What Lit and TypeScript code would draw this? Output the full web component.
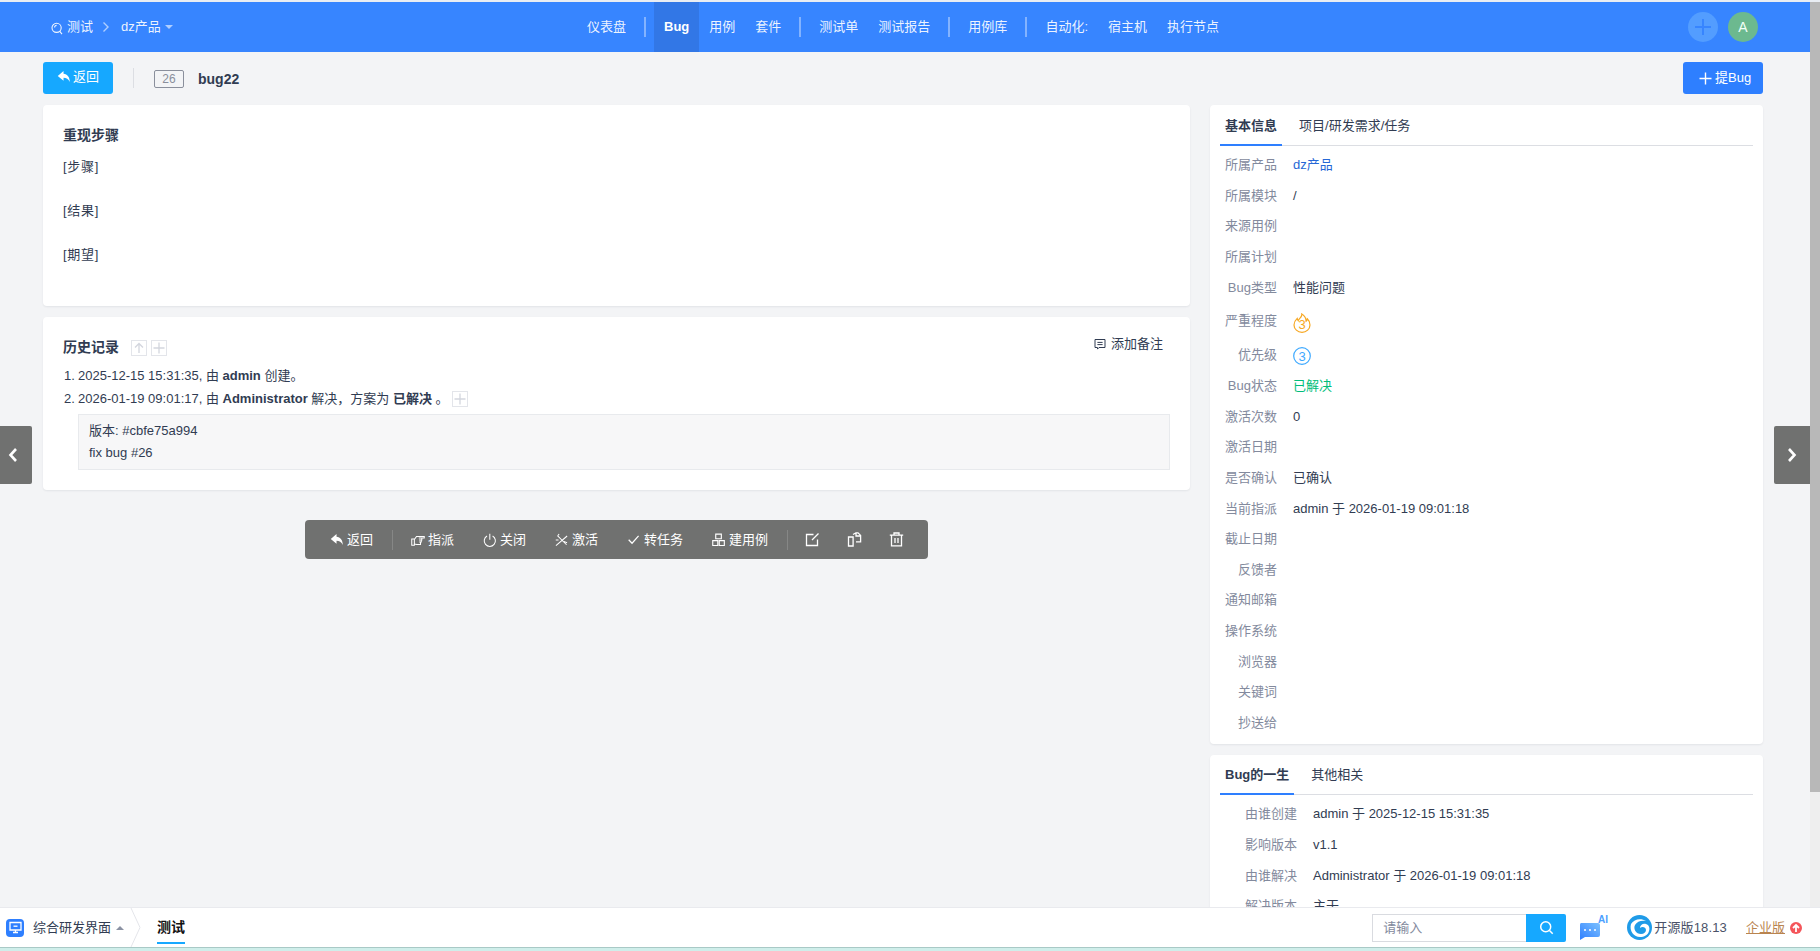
import { LitElement, html, css, svg } from "lit";
import { customElement } from "lit/decorators.js";

const reply = svg`<path d="M7 1.200.8 6.400 7 11.600V8.300c3 0 5.200 1.200 6.700 4.500 0-5-2.600-8.300-6.700-8.700z" fill="currentColor"/>`;
const handIcon = svg`<path d="M.8 6.400h2.800v6.800H.8zM3.600 7l2.300-3.200h8.300v1.600H8.400M8.400 5.400h3.200v2.200H8.600M11 7.600v2H8.800M10.200 9.600v2.800H6.200L3.600 11.800" fill="none" stroke="currentColor" stroke-width="1.100"/>`;
const powerIcon = svg`<path d="M4.300 3.200a6 6 0 1 0 6 0M7.300 .8v6.400" fill="none" stroke="currentColor" stroke-width="1.100"/>`;
const wandIcon = svg`<path d="M1 13.500 13 3.200M2.600 2.800l9.800 9.800M.8 7.500h3M3 3 4.400 1M9.500 9l3.400 1.400" fill="none" stroke="currentColor" stroke-width="1.100"/>`;
const checkIcon = svg`<path d="M1.800 7.200 5.400 11l7-8" fill="none" stroke="currentColor" stroke-width="1.300"/>`;
const treeIcon = svg`<path d="M4 1.200h6v5H4zM.8 8.200h5.400v5.200H.8zM7.800 8.200h5.400v5.200H7.800z" fill="none" stroke="currentColor" stroke-width="1.200"/>`;
const editIcon = svg`<path d="M12.500 7.500v6h-11v-11h7M13.500 1.500 7 8" fill="none" stroke="currentColor" stroke-width="1.300"/>`;
const copyIcon = svg`<path d="M1.500 5h4.600v9H1.500zM6 2.500 9 .8h2l2.600 2.600v6.400H9M9 1v3h4.400" fill="none" stroke="currentColor" stroke-width="1.300"/>`;
const trashIcon = svg`<path d="M.8 3.200h13.400M5 3V1h5v2M2.500 3.200v10.600h10V3.200M6 6v5M9 6v5" fill="none" stroke="currentColor" stroke-width="1.300"/>`;

const ic = (body: unknown) => html`<svg class="ic" viewBox="0 0 15 15">${body}</svg>`;

const navGroups: string[][] = [["仪表盘"], ["Bug", "用例", "套件"], ["测试单", "测试报告"], ["用例库"], ["自动化:", "宿主机", "执行节点"]];

const basicRows: { k: string; v?: string; c?: string; t?: string }[] = [
  { k: "所属产品", v: "dz产品", c: "link" },
  { k: "所属模块", v: "/" },
  { k: "来源用例" },
  { k: "所属计划" },
  { k: "Bug类型", v: "性能问题" },
  { k: "严重程度", t: "sev" },
  { k: "优先级", t: "pri" },
  { k: "Bug状态", v: "已解决", c: "ok" },
  { k: "激活次数", v: "0" },
  { k: "激活日期" },
  { k: "是否确认", v: "已确认" },
  { k: "当前指派", v: "admin 于 2026-01-19 09:01:18" },
  { k: "截止日期" },
  { k: "反馈者" },
  { k: "通知邮箱" },
  { k: "操作系统" },
  { k: "浏览器" },
  { k: "关键词" },
  { k: "抄送给" },
];

const lifeRows = [
  ["由谁创建", "admin 于 2025-12-15 15:31:35"],
  ["影响版本", "v1.1"],
  ["由谁解决", "Administrator 于 2026-01-19 09:01:18"],
  ["解决版本", "主干"],
];

const actions = [
  { i: handIcon, t: "指派" },
  { i: powerIcon, t: "关闭" },
  { i: wandIcon, t: "激活" },
  { i: checkIcon, t: "转任务" },
  { i: treeIcon, t: "建用例" },
];

@customElement("app-root")
export class AppRoot extends LitElement {
  static styles = css`
    :host {
      display: flex;
      flex-direction: column;
      position: relative;
      height: 951px;
      overflow: hidden;
      background: #e9edf3;
      padding-top: 2px;
      box-sizing: border-box;
      font: 13px/20px "Liberation Sans", "Noto Sans CJK SC", sans-serif;
      color: #313c52;
    }
    * { box-sizing: border-box; }
    .ic { width: 14px; height: 14px; flex: none; display: block; }
    .main { height: 905px; flex: none; display: flex; }
    .scroller { flex: 1; min-width: 0; overflow: hidden; background: #f3f4f6; }
    .track { width: 10px; flex: none; background: #eeeeee; }
    .thumb { height: 790px; background: #b8b8b8; }

    .header { height: 50px; background: #3785ff; display: flex; align-items: stretch; color: #fff; }
    .crumbs { width: 577px; flex: none; padding-left: 51px; display: flex; align-items: center; color: rgba(255,255,255,.92); }
    .crumbs .search { width: 12px; height: 13px; margin-right: 4px; margin-top: 2px; }
    .crumbs .chev { width: 8px; height: 12px; margin: 0 11px 0 9px; }
    .caret { width: 0; height: 0; border: 4px solid transparent; border-top: 4px solid rgba(255,255,255,.6); border-bottom: 0; margin-left: 4px; }
    .nav { display: flex; align-items: stretch; }
    .nav a { padding: 0 10px; display: flex; align-items: center; color: rgba(255,255,255,.92); }
    .nav a.on { background: #3277e6; color: #fff; font-weight: 700; }
    .nav i { width: 2px; height: 20px; margin: 15px 8px 0; background: rgba(255,255,255,.38); }
    .user { margin-left: auto; padding-right: 52px; display: flex; align-items: center; gap: 10px; }
    .circle { width: 30px; height: 30px; border-radius: 50%; display: flex; align-items: center; justify-content: center; }
    .circle.plus { background: #539dff; color: #3785ff; }
    .circle.plus svg { width: 18px; height: 18px; }
    .circle.a { background: #6cb98f; color: #f2fff8; font-size: 14px; }

    .wrap { padding: 10px 47px 19px 43px; }
    .bar { display: flex; align-items: center; height: 32px; margin-bottom: 11px; }
    .btn { height: 32px; border-radius: 3px; color: #fff; display: flex; align-items: center; }
    .btn.back { width: 70px; background: #16a8ff; padding: 0 0 2px 14px; gap: 2px; }
    .btn.new { width: 80px; background: #2e7fff; padding-left: 15px; gap: 2px; margin-left: auto; }
    .btn.new .ic { width: 15px; height: 15px; }
    .bar .sep { width: 1px; height: 20px; background: #dcdee3; margin: 0 20px; }
    .idbox { width: 30px; height: 18px; border: 1px solid #8a8f9c; border-radius: 2px; font-size: 12px; line-height: 16px; color: #8a8f9c; text-align: center; margin: 1px 14px 0 0; }
    .bar b { font-size: 14px; margin-top: 2px; }

    .cols { display: grid; grid-template-columns: 1147px 553px; column-gap: 20px; align-items: start; }
    .card { background: #fff; border-radius: 4px; box-shadow: 0 1px 2px rgba(30,40,60,.08); }
    .left { display: flex; flex-direction: column; gap: 11px; }
    .steps { height: 201px; padding: 20px; }
    .title { font-size: 14px; font-weight: 700; line-height: 20px; }
    .steps .title { margin-bottom: 11px; }
    .steps p { margin: 0 0 22px; line-height: 22px; letter-spacing: .7px; }

    .hist { padding: 20px 27px 20px 20px; }
    .hhead { display: flex; align-items: flex-start; height: 27px; }
    .mini { width: 16px; height: 16px; border: 1px solid #e3e5ea; color: #d3d6de; margin-left: 4px; display: flex; align-items: center; justify-content: center; margin-top: 3px; }
    .mini.first { margin-left: 12px; }
    .mini svg { width: 12px; height: 12px; }
    .note { margin-left: auto; display: flex; align-items: center; gap: 5px; margin-top: -3px; }
    .note .ic { width: 12px; height: 12px; }
    .li { display: flex; align-items: center; height: 23.5px; }
    .li .n { width: 14px; margin-left: 1px; flex: none; }
    .li b { margin: 0 3.6px; }
    .li .mini { margin: 0 0 0 3px; }
    .comment { margin: 3px -7px 0 15px; padding: 5px 10px; background: #f7f7f8; border: 1px solid #e8eaed; line-height: 22px; }

    .actions { align-self: center; width: 623px; height: 39px; margin-top: 19px; padding-left: 10.5px; border-radius: 4px; background: #707170; color: #fff; display: flex; align-items: center; }
    .act { display: flex; align-items: center; gap: 3px; padding: 0 14.5px; }
    .act.iconly { padding: 0 13.5px; }
    .act .ic { width: 14px; height: 14px; }
    .act.iconly .ic { width: 15px; height: 15px; }
    .actions i { width: 1px; height: 20px; background: #868786; margin: 0 4px; }

    .right { display: flex; flex-direction: column; gap: 11px; }
    .side { padding: 0 10px 6px; }
    .tabs { display: flex; height: 41px; border-bottom: 1px solid #dcdee3; margin-bottom: 4px; }
    .tab { padding: 0 5px; height: 41px; line-height: 41px; margin-right: 12px; border-bottom: 2px solid transparent; }
    .tab.on { font-weight: 700; border-bottom-color: #2e7fff; }
    .tabs.b { height: 40px; }
    .tabs.b .tab { height: 40px; line-height: 40px; margin-right: 12px; }
    .row { display: grid; grid-template-columns: 57px 1fr; column-gap: 16px; height: 30.6px; align-items: center; }
    .life { height: 285px; }
    .life .row { grid-template-columns: 77px 1fr; }
    .row.sev { height: 36.5px; }
    .row.pri { height: 31.5px; }
    .k { text-align: right; color: #838a9d; }
    .link { color: #2667d6; }
    .ok { color: #00bd7a; }
    .flame { width: 18px; height: 20px; display: block; margin-top: 4px; }
    .prio { width: 18px; height: 18px; display: block; margin-top: 1px; }

    .float { position: absolute; top: 426px; height: 58px; background: #707170; color: #fff; display: flex; align-items: center; justify-content: center; }
    .float svg { width: 12px; height: 16px; }
    .float.p { left: 0; width: 32px; padding-right: 6px; border-radius: 0 2px 2px 0; }
    .float.x { left: 1774px; width: 36px; border-radius: 2px 0 0 2px; }

    .bottom { height: 40px; flex: none; background: #fff; border-top: 1px solid #e9eaee; display: flex; align-items: center; padding-left: 6px; padding-right: 18px; }
    .appico { width: 18px; height: 18px; border-radius: 4px; background: #2e7fff; display: flex; align-items: center; justify-content: center; margin-right: 9px; }
    .appico svg { width: 13px; height: 13px; }
    .up { width: 0; height: 0; border: 4px solid transparent; border-bottom: 4px solid #8b92a3; border-top: 0; margin: 0 6px 0 5px; }
    .ang { width: 11px; height: 39px; margin-right: 16px; }
    .cur { font-size: 14px; font-weight: 700; color: #111; height: 32px; line-height: 30px; border-bottom: 2px solid #16a8ff; }
    .bright { margin-left: auto; display: flex; align-items: center; }
    .inp { width: 154px; height: 28px; border: 1px solid #d9dbe0; border-right: 0; padding-left: 10px; line-height: 26px; color: #838a9d; }
    .sbtn { width: 40px; height: 28px; background: #16a8ff; border-radius: 0 2px 2px 0; display: flex; align-items: center; justify-content: center; color: #fff; }
    .sbtn svg { width: 15px; height: 15px; }
    .ai { width: 30px; height: 26px; margin: 0 19px 0 12px; }
    .logo { width: 25px; height: 25px; margin-right: 2px; }
    .ver { color: #4a5268; letter-spacing: .15px; margin-right: 19px; }
    .ent { color: #b9844f; text-decoration: underline; margin-right: 5px; }
    .upg { width: 12px; height: 12px; }
    .strip { height: 4px; flex: none; background: #cfeeea; border-top: 1px solid #a9c9c6; }
  `;

  render() {
    return html`
      <div class="main">
        <div class="scroller">
          <div class="header">
            <div class="crumbs">
              <svg class="search" viewBox="0 0 12 13"><circle cx="5.600" cy="5.800" r="4.600" fill="none" stroke="currentColor" stroke-width="1.100"/><path d="m8.800 9.400 2.200 2.800M3.600 5.400a2 2 0 0 1 2-2" fill="none" stroke="currentColor" stroke-width="1.100"/></svg>
              <span>测试</span>
              <svg class="chev" viewBox="0 0 8 12"><path d="m1.500 1.500 4.500 4.500-4.500 4.500" fill="none" stroke="rgba(255,255,255,.6)" stroke-width="1.400"/></svg>
              <span>dz产品</span><span class="caret"></span>
            </div>
            <div class="nav">
              ${navGroups.map((g, gi) => html`
                ${gi ? html`<i></i>` : ""}
                ${g.map((n) => html`<a class=${n === "Bug" ? "on" : ""}>${n}</a>`)}
              `)}
            </div>
            <div class="user">
              <div class="circle plus"><svg viewBox="0 0 18 18"><path d="M9 1v16M1 9h16" stroke="currentColor" stroke-width="2"/></svg></div>
              <div class="circle a">A</div>
            </div>
          </div>
          <div class="wrap">
            <div class="bar">
              <div class="btn back">${ic(reply)}<span>返回</span></div>
              <div class="sep"></div>
              <div class="idbox">26</div>
              <b>bug22</b>
              <div class="btn new">
                <svg class="ic" viewBox="0 0 15 15"><path d="M7.500 1.500v12M1.500 7.500h12" stroke="currentColor" stroke-width="1.400"/></svg>
                <span>提Bug</span>
              </div>
            </div>
            <div class="cols">
              <div class="left">
                <div class="card steps">
                  <div class="title">重现步骤</div>
                  <p>[步骤]</p><p>[结果]</p><p>[期望]</p>
                </div>
                <div class="card hist">
                  <div class="hhead">
                    <span class="title">历史记录</span>
                    <span class="mini first"><svg viewBox="0 0 12 12"><path d="M6 11V1.500M2 5.500l4-4 4 4" fill="none" stroke="currentColor" stroke-width="1.300"/></svg></span>
                    <span class="mini"><svg viewBox="0 0 12 12"><path d="M6 .5v11M.5 6h11" fill="none" stroke="currentColor" stroke-width="1.300"/></svg></span>
                    <span class="note">
                      <svg class="ic" viewBox="0 0 12 12"><path d="M1 1.500h10v8H5l-1.500 1.600V9.500H1zM3.400 4.400h5.200M3.400 6.600h5.200" fill="none" stroke="currentColor" stroke-width="1"/></svg>
                      添加备注
                    </span>
                  </div>
                  <div class="li"><span class="n">1.</span><span>2025-12-15 15:31:35, 由</span><b>admin</b><span>创建。</span></div>
                  <div class="li"><span class="n">2.</span><span>2026-01-19 09:01:17, 由</span><b>Administrator</b><span>解决，方案为</span><b>已解决</b><span>。</span>
                    <span class="mini"><svg viewBox="0 0 12 12"><path d="M6 .5v11M.5 6h11" fill="none" stroke="currentColor" stroke-width="1.300"/></svg></span>
                  </div>
                  <div class="comment">版本: #cbfe75a994<br />fix bug #26</div>
                </div>
                <div class="actions">
                  <div class="act">${ic(reply)}<span>返回</span></div>
                  <i></i>
                  ${actions.map((a) => html`<div class="act">${ic(a.i)}<span>${a.t}</span></div>`)}
                  <i></i>
                  <div class="act iconly">${ic(editIcon)}</div>
                  <div class="act iconly">${ic(copyIcon)}</div>
                  <div class="act iconly">${ic(trashIcon)}</div>
                </div>
              </div>
              <div class="right">
                <div class="card side">
                  <div class="tabs"><div class="tab on">基本信息</div><div class="tab">项目/研发需求/任务</div></div>
                  ${basicRows.map((r) => html`
                    <div class="row ${r.t ?? ""}">
                      <span class="k">${r.k}</span>
                      ${r.t === "sev"
                        ? html`<svg class="flame" viewBox="0 0 18 20"><path d="M8.800 1c.6 3-3 4.600-3.600 6.600C4.600 6.800 4.300 6.300 4.200 5.400 2.300 7.200 1 9.300 1 12a8 7.300 0 0 0 16 0c0-2.600-1-4.600-2.700-6.200-.1 1.200-.5 1.900-1.200 2.400C13 5.300 11.500 2.500 8.800 1z" fill="none" stroke="#f7a823" stroke-width="1.200"/><text x="9" y="16" font-size="13" text-anchor="middle" fill="#f7a823">3</text></svg>`
                        : r.t === "pri"
                        ? html`<svg class="prio" viewBox="0 0 18 18"><circle cx="9" cy="9" r="8.300" fill="none" stroke="#3ea9ff" stroke-width="1.200"/><text x="9" y="13.500" font-size="13" text-anchor="middle" fill="#3ea9ff">3</text></svg>`
                        : html`<span class=${r.c ?? ""}>${r.v ?? ""}</span>`}
                    </div>`)}
                </div>
                <div class="card side life">
                  <div class="tabs b"><div class="tab on">Bug的一生</div><div class="tab">其他相关</div></div>
                  ${lifeRows.map((r) => html`<div class="row"><span class="k">${r[0]}</span><span>${r[1]}</span></div>`)}
                </div>
              </div>
            </div>
          </div>
        </div>
        <div class="track"><div class="thumb"></div></div>
      </div>

      <div class="float p"><svg viewBox="0 0 12 16"><path d="M9 2 3.500 8 9 14" fill="none" stroke="#fff" stroke-width="2.600"/></svg></div>
      <div class="float x"><svg viewBox="0 0 12 16"><path d="m3 2 5.500 6L3 14" fill="none" stroke="#fff" stroke-width="2.600"/></svg></div>

      <div class="bottom">
        <div class="appico"><svg viewBox="0 0 13 13"><path d="M1 1.500h11v7.500H1zM4 11.500h5M6.500 9v2.500" fill="none" stroke="#fff" stroke-width="1.300"/><path d="M4.500 5.200h4" stroke="#fff" stroke-width="1.300"/></svg></div>
        <span>综合研发界面</span>
        <span class="up"></span>
        <svg class="ang" viewBox="0 0 11 39"><path d="m1 0 9 19.500L1 39" fill="none" stroke="#e4e6ea"/></svg>
        <span class="cur">测试</span>
        <div class="bright">
          <div class="inp">请输入</div>
          <div class="sbtn"><svg viewBox="0 0 15 15"><circle cx="6.700" cy="6.700" r="5" fill="none" stroke="#fff" stroke-width="1.500"/><path d="m10.500 10.500 3.200 3.200" stroke="#fff" stroke-width="1.500"/></svg></div>
          <svg class="ai" viewBox="0 0 30 26">
            <defs><linearGradient id="aig" x1="0" y1="1" x2="1" y2="0"><stop offset="0" stop-color="#2e7fff"/><stop offset="1" stop-color="#7cc0ff"/></linearGradient></defs>
            <path d="M3 8h17a2 2 0 0 1 2 2v10a2 2 0 0 1-2 2H7l-5 3V10a2 2 0 0 1 1-2z" fill="url(#aig)"/>
            <circle cx="7" cy="15" r="1" fill="#fff"/><circle cx="12" cy="15" r="1" fill="#fff"/><circle cx="17" cy="15" r="1" fill="#fff"/>
            <text x="20" y="8" font-size="10" font-weight="700" fill="#4d9fff">AI</text>
          </svg>
          <svg class="logo" viewBox="0 0 25 25"><circle cx="12.500" cy="12.500" r="12.500" fill="#1f9be8"/><path d="M4 9c3-5 10-6 15-3-4-1-9 0-11 4-2 4 1 9 6 9 3 0 5-2 5-4 0-3-4-4-6-2 0-3 3-5 6-4 3 1 4 4 3 7-1 4-5 6-9 6-6 0-11-6-9-13z" fill="#fff"/></svg>
          <span class="ver">开源版18.13</span>
          <span class="ent">企业版</span>
          <svg class="upg" viewBox="0 0 12 12"><circle cx="6" cy="6" r="6" fill="#f4555a"/><path d="M6 10V3.500M3 6l3-3 3 3" fill="none" stroke="#fff" stroke-width="1.800"/></svg>
        </div>
      </div>
      <div class="strip"></div>
    `;
  }
}
